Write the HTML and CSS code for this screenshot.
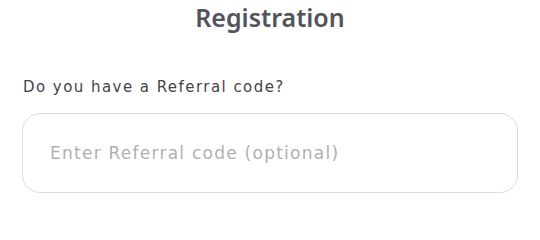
FILE: index.html
```html
<!DOCTYPE html>
<html lang="en">
<head>
<meta charset="utf-8">
<title>Registration</title>
<link rel="stylesheet" href="styles.css">
</head>
<body>
<main class="page">
  <h1 class="title">Registration</h1>
  <label class="label" for="ref">Do you have a Referral code?</label>
  <input class="field" id="ref" type="text" placeholder="Enter Referral code (optional)">
</main>
</body>
</html>
```

FILE: styles.css
```css
html, body {
  margin: 0;
  padding: 0;
  background: #ffffff;
}
.page {
  display: flex;
  flex-direction: column;
  padding: 0 22px;
  font-family: "DejaVu Sans", "Noto Sans", sans-serif;
}
.title {
  margin: 0;
  padding-top: 1px;
  text-align: center;
  font-family: "Noto Sans", sans-serif;
  font-size: 25px;
  line-height: 32px;
  font-weight: 600;
  color: #53535b;
}
.label {
  margin-top: 43px;
  padding-left: 1px;
  font-size: 15px;
  line-height: 22px;
  letter-spacing: 1.45px;
  color: #444448;
}
.field {
  box-sizing: border-box;
  margin-top: 15px;
  width: 496px;
  height: 80px;
  padding: 0 0 0 27px;
  border: 1px solid #dcdcdc;
  border-radius: 18px;
  font-family: inherit;
  font-size: 17px;
  letter-spacing: 1.25px;
  color: #444;
  background: #fff;
  outline: none;
}
.field::placeholder {
  color: #b0b0b0;
}
```
